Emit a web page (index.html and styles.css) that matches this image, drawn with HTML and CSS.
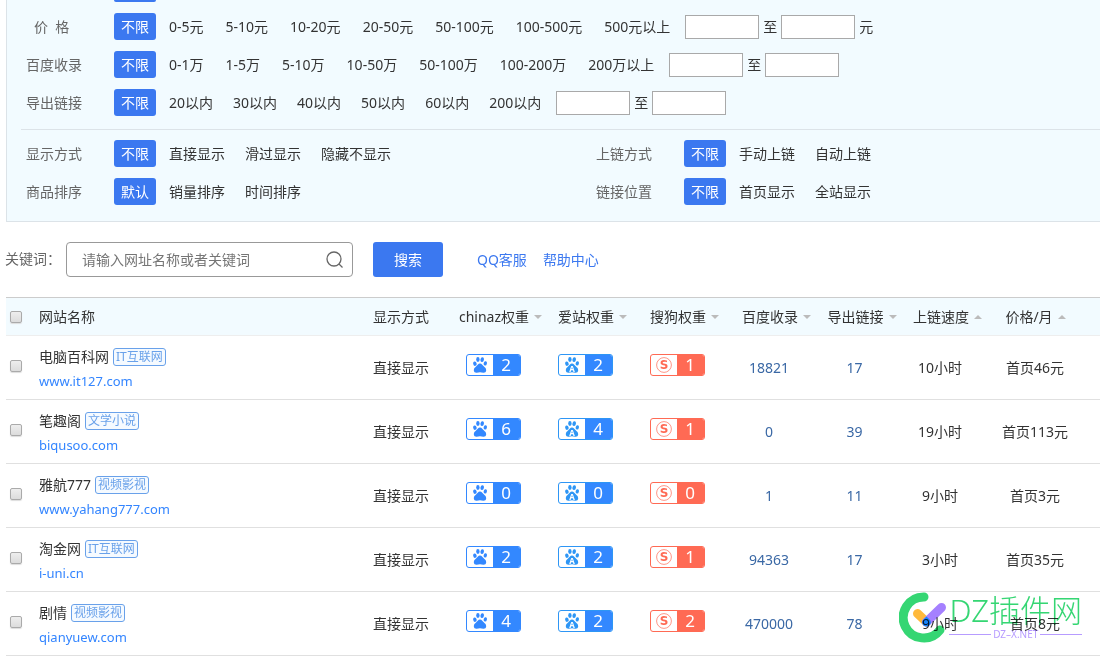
FILE: index.html
```html
<!DOCTYPE html>
<html lang="zh-CN">
<head>
<meta charset="utf-8">
<title>友情链接</title>
<link rel="stylesheet" href="styles.css">
</head>
<body>
<svg class="defs" aria-hidden="true">
  <symbol id="paw" viewBox="0 0 14 16">
    <ellipse cx="1.9" cy="6.7" rx="1.7" ry="2.2" transform="rotate(-12 1.9 6.7)"/>
    <ellipse cx="4.9" cy="2.5" rx="1.7" ry="2.4"/>
    <ellipse cx="9.2" cy="2.6" rx="1.7" ry="2.4" transform="rotate(10 9.2 2.6)"/>
    <ellipse cx="12.3" cy="6.4" rx="1.6" ry="2.2" transform="rotate(12 12.3 6.4)"/>
    <path d="M7 6.4c1.8 0 2.4 1.500 3.500 2.700 1.200 1.300 2.700 2.200 2.700 4.100 0 1.800-1.300 2.600-2.900 2.500-1.200-.1-2-.4-3.300-.4s-2.100.3-3.300.4C2.100 15.800.8 15 .8 13.200c0-1.900 1.500-2.800 2.700-4.100C4.600 7.900 5.200 6.400 7 6.400z"/>
  </symbol>
  <symbol id="paw-a" viewBox="0 0 14 16">
    <use href="#paw" width="14" height="16"/>
    <text x="7" y="15" class="paw-letter">A</text>
  </symbol>
  <symbol id="sogou" viewBox="0 0 16 16">
    <circle cx="8" cy="8" r="7.400" fill="none" stroke="currentColor" stroke-width="1" opacity=".7"/>
    <text x="8" y="12" class="s-letter">S</text>
  </symbol>
</svg>

<section class="panel">
  <div class="cut-row"><span class="cut-chip"></span></div>
  <div class="filters">
    <div class="row">
      <span class="label label-short">价&nbsp; 格</span><button class="chip">不限</button>
      <div class="options ranges"><a href="#">0-5元</a><a href="#">5-10元</a><a href="#">10-20元</a><a href="#">20-50元</a><a href="#">50-100元</a><a href="#">100-500元</a><a href="#">500元以上</a></div>
      <div class="between"><input type="text" aria-label="最低价格"><span>至</span><input type="text" aria-label="最高价格"><span>元</span></div>
    </div>
    <div class="row">
      <span class="label">百度收录</span><button class="chip">不限</button>
      <div class="options ranges"><a href="#">0-1万</a><a href="#">1-5万</a><a href="#">5-10万</a><a href="#">10-50万</a><a href="#">50-100万</a><a href="#">100-200万</a><a href="#">200万以上</a></div>
      <div class="between"><input type="text" aria-label="最少收录"><span>至</span><input type="text" aria-label="最多收录"></div>
    </div>
    <div class="row">
      <span class="label">导出链接</span><button class="chip">不限</button>
      <div class="options"><a href="#">20以内</a><a href="#">30以内</a><a href="#">40以内</a><a href="#">50以内</a><a href="#">60以内</a><a href="#">200以内</a></div>
      <div class="between"><input type="text" aria-label="最少导出"><span>至</span><input type="text" aria-label="最多导出"></div>
    </div>
  </div>
  <div class="filters filters-two">
    <div class="row"><span class="label">显示方式</span><button class="chip">不限</button><div class="options"><a href="#">直接显示</a><a href="#">滑过显示</a><a href="#">隐藏不显示</a></div></div>
    <div class="row"><span class="label">上链方式</span><button class="chip">不限</button><div class="options"><a href="#">手动上链</a><a href="#">自动上链</a></div></div>
    <div class="row"><span class="label">商品排序</span><button class="chip">默认</button><div class="options"><a href="#">销量排序</a><a href="#">时间排序</a></div></div>
    <div class="row"><span class="label">链接位置</span><button class="chip">不限</button><div class="options"><a href="#">首页显示</a><a href="#">全站显示</a></div></div>
  </div>
</section>

<form class="search">
  <label for="kw">关键词：</label>
  <div class="search-box">
    <input id="kw" type="text" placeholder="请输入网址名称或者关键词">
    <svg viewBox="0 0 18 18" width="18" height="18" aria-hidden="true"><circle cx="8" cy="8" r="7" /><path d="M13 13l3.500 3.500"/></svg>
  </div>
  <button type="button" class="search-btn">搜索</button>
  <nav class="help"><a href="#">QQ客服</a><a href="#">帮助中心</a></nav>
</form>

<table class="sites">
  <colgroup><col class="c-check"><col><col class="c-mid"><col class="c-mid"><col class="c-mid"><col class="c-mid"><col class="c-mid"><col class="c-links"><col class="c-mid"><col class="c-price"></colgroup>
  <thead>
    <tr>
      <th><input type="checkbox" aria-label="全选"></th>
      <th class="name-head">网站名称</th>
      <th>显示方式</th>
      <th><button class="sort down">chinaz权重</button></th>
      <th><button class="sort down">爱站权重</button></th>
      <th><button class="sort down">搜狗权重</button></th>
      <th><button class="sort down">百度收录</button></th>
      <th><button class="sort down">导出链接</button></th>
      <th><button class="sort up">上链速度</button></th>
      <th><button class="sort up">价格/月</button></th>
    </tr>
  </thead>
  <tbody>
    <tr>
      <td><input type="checkbox" aria-label="选择 电脑百科网"></td>
      <td class="site"><div class="site-name">电脑百科网<span class="tag">IT互联网</span></div><a href="#">www.it127.com</a></td>
      <td>直接显示</td>
      <td><span class="rank"><svg class="paw"><use href="#paw"/></svg><b>2</b></span></td>
      <td><span class="rank az"><svg class="paw"><use href="#paw-a"/></svg><b>2</b></span></td>
      <td><span class="rank sg"><svg><use href="#sogou"/></svg><b>1</b></span></td>
      <td class="num">18821</td><td class="num">17</td><td>10小时</td><td>首页46元</td>
    </tr>
    <tr>
      <td><input type="checkbox" aria-label="选择 笔趣阁"></td>
      <td class="site"><div class="site-name">笔趣阁<span class="tag">文学小说</span></div><a href="#">biqusoo.com</a></td>
      <td>直接显示</td>
      <td><span class="rank"><svg class="paw"><use href="#paw"/></svg><b>6</b></span></td>
      <td><span class="rank az"><svg class="paw"><use href="#paw-a"/></svg><b>4</b></span></td>
      <td><span class="rank sg"><svg><use href="#sogou"/></svg><b>1</b></span></td>
      <td class="num">0</td><td class="num">39</td><td>19小时</td><td>首页113元</td>
    </tr>
    <tr>
      <td><input type="checkbox" aria-label="选择 雅航777"></td>
      <td class="site"><div class="site-name">雅航777<span class="tag">视频影视</span></div><a href="#">www.yahang777.com</a></td>
      <td>直接显示</td>
      <td><span class="rank"><svg class="paw"><use href="#paw"/></svg><b>0</b></span></td>
      <td><span class="rank az"><svg class="paw"><use href="#paw-a"/></svg><b>0</b></span></td>
      <td><span class="rank sg"><svg><use href="#sogou"/></svg><b>0</b></span></td>
      <td class="num">1</td><td class="num">11</td><td>9小时</td><td>首页3元</td>
    </tr>
    <tr>
      <td><input type="checkbox" aria-label="选择 淘金网"></td>
      <td class="site"><div class="site-name">淘金网<span class="tag">IT互联网</span></div><a href="#">i-uni.cn</a></td>
      <td>直接显示</td>
      <td><span class="rank"><svg class="paw"><use href="#paw"/></svg><b>2</b></span></td>
      <td><span class="rank az"><svg class="paw"><use href="#paw-a"/></svg><b>2</b></span></td>
      <td><span class="rank sg"><svg><use href="#sogou"/></svg><b>1</b></span></td>
      <td class="num">94363</td><td class="num">17</td><td>3小时</td><td>首页35元</td>
    </tr>
    <tr>
      <td><input type="checkbox" aria-label="选择 剧情"></td>
      <td class="site"><div class="site-name">剧情<span class="tag">视频影视</span></div><a href="#">qianyuew.com</a></td>
      <td>直接显示</td>
      <td><span class="rank"><svg class="paw"><use href="#paw"/></svg><b>4</b></span></td>
      <td><span class="rank az"><svg class="paw"><use href="#paw-a"/></svg><b>2</b></span></td>
      <td><span class="rank sg"><svg><use href="#sogou"/></svg><b>2</b></span></td>
      <td class="num">470000</td><td class="num">78</td><td>9小时</td><td>首页8元</td>
    </tr>
  </tbody>
</table>

<div class="watermark">
  <svg viewBox="0 0 48 51" width="48" height="51" aria-hidden="true">
    <path d="M25 5A20.500 20.500 0 1 0 41 38" fill="none" stroke="#35d673" stroke-width="9" stroke-linecap="round"/>
    <path d="M18.500 21.500L27.500 30" stroke="#ffb93c" stroke-width="9" stroke-linecap="round"/>
    <path d="M42.500 15.500L27.500 30" stroke="#a580ff" stroke-width="9" stroke-linecap="round"/>
    <path d="M27.500 24.500L31 28c1.500 2 .8 6-3.500 6.500-4.300-.5-5-4-3.500-6.500z" fill="#1684fc"/>
  </svg>
  <div class="wm-text">
    <div class="wm-name">DZ插件网</div>
    <div class="wm-sub">DZ–X.NET</div>
  </div>
</div>
</body>
</html>
```
FILE: styles.css
```css
* { box-sizing: border-box; }
body {
  margin: 0;
  overflow: hidden;
  background: #fff;
  color: #333;
  font: 14px/20px "Noto Sans", "Noto Sans CJK SC", sans-serif;
}
a { color: inherit; text-decoration: none; white-space: nowrap; }
button, input { font: inherit; margin: 0; }
button { border: 0; padding: 0; background: none; color: inherit; }
.defs { display: none; }

.panel {
  margin-left: 6px;
  padding: 0 0 16px 14px;
  background: #f2fbff;
  border: 1px solid #dce3e8;
  border-width: 0 0 1px 1px;
}
.cut-row { padding-left: 93px; }
.cut-chip {
  display: block;
  width: 42px;
  height: 2px;
  background: #3b78f0;
  border-radius: 0 0 3px 3px;
}
.filters { display: grid; gap: 11px 0; padding: 11px 0 13px 5px; }
.filters-two {
  grid-template-columns: 570px 1fr;
  padding: 10px 0 0 5px;
  border-top: 1px solid #dce3e8;
}
.row { display: flex; align-items: center; height: 27px; }
.label { width: 88px; color: #666; white-space: pre; }
.label-short { padding-left: 8px; }
.chip {
  width: 42px;
  height: 27px;
  margin-right: 13px;
  border-radius: 3px;
  background: #3b78f0;
  color: #fff;
}
.options { display: flex; gap: 20px; }
.ranges { gap: 22px; }
.between { display: flex; align-items: center; gap: 4px; margin-left: 15px; }
.between input {
  width: 74px;
  height: 24px;
  border: 1px solid #a9a9a9;
  background: #fff;
}

.search { display: flex; align-items: center; height: 75px; padding-left: 5px; }
.search label {
  width: 61px;
  padding-bottom: 3px;
  color: #666;
  font-family: "Noto Sans CJK TC", sans-serif;
  white-space: nowrap;
}
.search-box {
  display: flex;
  align-items: center;
  width: 287px;
  height: 35px;
  padding: 0 8px 0 15px;
  border: 1px solid #999;
  border-radius: 4px;
}
.search-box input {
  flex: 1;
  min-width: 0;
  padding: 0;
  border: 0;
  outline: 0;
  background: none;
}
.search-box input::placeholder { color: #757575; }
.search-box svg { fill: none; stroke: #666; stroke-width: 1.3; }
.search-btn {
  width: 70px;
  height: 35px;
  margin: 0 34px 0 20px;
  border-radius: 3px;
  background: #3b78f0;
  color: #fff;
}
.help { display: flex; gap: 16px; color: #3b78f0; }

.sites {
  width: calc(100% - 6px);
  margin-left: 6px;
  border-collapse: separate;
  border-spacing: 0;
  table-layout: fixed;
}
.c-check { width: 33px; }
.c-mid { width: 92px; }
.c-links { width: 79px; }
.c-price { width: 114px; }
th, td { padding: 0; text-align: center; font-weight: 400; white-space: nowrap; }
th {
  height: 39px;
  background: #f2fbff;
  border-top: 1px solid #ccc;
  border-bottom: 1px solid #eee;
}
td { height: 64px; border-bottom: 1px solid #e0e0e0; }
th:first-child, td:first-child { padding-left: 4px; text-align: left; }
td:first-child { padding-bottom: 4px; }
td:last-child { padding-right: 16px; }
th:last-child { padding-right: 30px; }
th.name-head { text-align: left; }
input[type="checkbox"] {
  display: block;
  appearance: none;
  width: 12px;
  height: 12px;
  border: 1px solid #aaa;
  border-radius: 2px;
  background: linear-gradient(#eee, #dcdcdc);
  box-shadow: 0 1px 1px #ddd;
}
.sort { padding-left: 2px; }
.sort::after {
  content: "";
  display: inline-block;
  margin: 0 -13px 3px 5px;
  border: 4px solid transparent;
}
.sort.down::after { border-top-color: #bbb; border-bottom-width: 0; }
.sort.up::after { border-bottom-color: #bbb; border-top-width: 0; }
td.site { padding-top: 2px; text-align: left; }
.site-name { display: flex; align-items: center; gap: 4px; height: 24px; }
.site a { display: block; line-height: 24px; font-size: 13px; color: #3385ff; }
.tag {
  padding: 0 2px;
  border: 1px solid #69a1ea;
  border-radius: 3px;
  background: #f5faff;
  color: #69a1ea;
  font-size: 12px;
  line-height: 16px;
}
.num { color: #3a68a5; }

.rank {
  display: flex;
  align-items: center;
  width: 55px;
  height: 22px;
  margin: 0 auto 6px;
  overflow: hidden;
  border: 1px solid #3388ff;
  border-radius: 3px;
  color: #3388ff;
}
.rank svg { width: 16px; height: 16px; margin: 0 5px; fill: currentColor; }
.rank .paw { width: 14px; margin: 0 6px; }
.rank b {
  flex: 1;
  background: #3388ff;
  color: #fff;
  font-size: 17px;
  font-weight: 400;
  line-height: 20px;
}
.rank.az { color: #2e96f5; border-color: #2e96f5; }
.rank.sg { color: #ff6a54; border-color: #ff6a54; }
.rank.sg b { background: #ff6a54; }
.paw-letter { fill: #fff; font: 700 8px "Noto Sans", sans-serif; text-anchor: middle; }
.s-letter { font: 700 12px "DejaVu Sans", sans-serif; text-anchor: middle; }

.watermark {
  position: absolute;
  right: 18px;
  top: 592px;
  display: flex;
  gap: 2px;
  mix-blend-mode: multiply;
}
.wm-name { color: #35d673; font-size: 31px; line-height: 36px; font-weight: 300; }
.wm-sub {
  display: flex;
  align-items: center;
  gap: 2px;
  color: #b79cff;
  font-size: 10px;
  line-height: 12px;
}
.wm-sub::before, .wm-sub::after { content: ""; flex: 1; height: 1px; background: #b79cff; }
```
